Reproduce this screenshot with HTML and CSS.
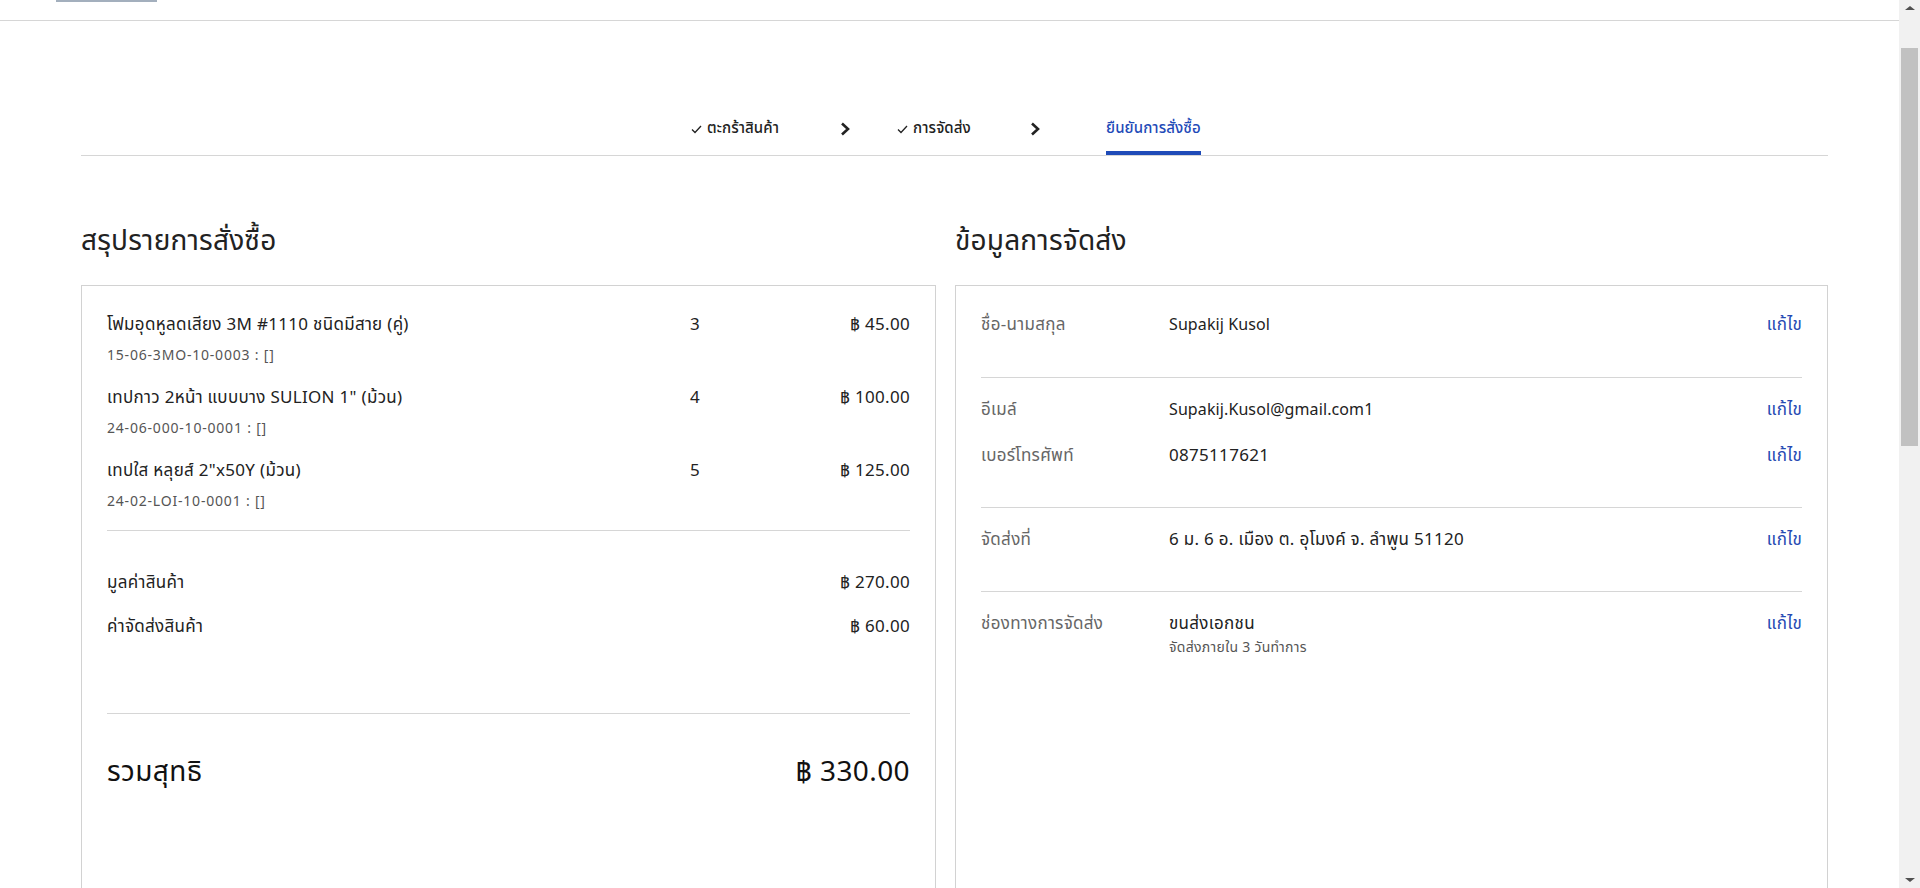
FILE: index.html
```html
<!DOCTYPE html>
<html lang="th">
<head>
<meta charset="utf-8">
<title>ยืนยันการสั่งซื้อ</title>
<link rel="stylesheet" href="styles.css">
</head>
<body>
<header class="topbar"><div class="topbar-mark"></div></header>
<main class="page">
  <nav class="steps">
    <div class="step step-1"><svg class="check" width="11" height="9" viewBox="0 0 11 9"><polyline points="1,4.5 4,7.5 10,1" fill="none" stroke="#222" stroke-width="1.3"/></svg>ตะกร้าสินค้า</div>
    <div class="chev chev-1"><svg width="10" height="14" viewBox="0 0 10 14"><polyline points="2,1.5 8,7 2,12.5" fill="none" stroke="#222" stroke-width="2.6"/></svg></div>
    <div class="step step-2"><svg class="check" width="11" height="9" viewBox="0 0 11 9"><polyline points="1,4.5 4,7.5 10,1" fill="none" stroke="#222" stroke-width="1.3"/></svg>การจัดส่ง</div>
    <div class="chev chev-2"><svg width="10" height="14" viewBox="0 0 10 14"><polyline points="2,1.5 8,7 2,12.5" fill="none" stroke="#222" stroke-width="2.6"/></svg></div>
    <div class="step step-3 active">ยืนยันการสั่งซื้อ</div>
  </nav>

  <div class="columns">
    <section class="col">
      <h2 class="col-title">สรุปรายการสั่งซื้อ</h2>
      <div class="card summary-card">
        <div class="items">
          <div class="item">
            <div class="item-name">โฟมอุดหูลดเสียง 3M #1110 ชนิดมีสาย (คู่)</div>
            <div class="item-qty">3</div>
            <div class="item-price">฿ 45.00</div>
            <div class="item-code">15-06-3MO-10-0003 : []</div>
          </div>
          <div class="item">
            <div class="item-name">เทปกาว 2หน้า แบบบาง SULION 1" (ม้วน)</div>
            <div class="item-qty">4</div>
            <div class="item-price">฿ 100.00</div>
            <div class="item-code">24-06-000-10-0001 : []</div>
          </div>
          <div class="item">
            <div class="item-name">เทปใส หลุยส์ 2"x50Y (ม้วน)</div>
            <div class="item-qty">5</div>
            <div class="item-price">฿ 125.00</div>
            <div class="item-code">24-02-LOI-10-0001 : []</div>
          </div>
        </div>
        <div class="costs">
          <div class="cost-row"><span>มูลค่าสินค้า</span><span>฿ 270.00</span></div>
          <div class="cost-row"><span>ค่าจัดส่งสินค้า</span><span>฿ 60.00</span></div>
        </div>
        <div class="total-row"><span>รวมสุทธิ</span><span>฿ 330.00</span></div>
      </div>
    </section>

    <section class="col">
      <h2 class="col-title">ข้อมูลการจัดส่ง</h2>
      <div class="card info-card">
        <div class="info-group first">
          <div class="info-row"><div class="info-label">ชื่อ-นามสกุล</div><div class="info-value latin">Supakij Kusol</div><a class="edit">แก้ไข</a></div>
        </div>
        <div class="info-group">
          <div class="info-row"><div class="info-label">อีเมล์</div><div class="info-value latin">Supakij.Kusol@gmail.com1</div><a class="edit">แก้ไข</a></div>
          <div class="info-row"><div class="info-label">เบอร์โทรศัพท์</div><div class="info-value">0875117621</div><a class="edit">แก้ไข</a></div>
        </div>
        <div class="info-group">
          <div class="info-row"><div class="info-label">จัดส่งที่</div><div class="info-value">6 ม. 6 อ. เมือง ต. อุโมงค์ จ. ลำพูน 51120</div><a class="edit">แก้ไข</a></div>
        </div>
        <div class="info-group last">
          <div class="info-row"><div class="info-label">ช่องทางการจัดส่ง</div><div class="info-value">ขนส่งเอกชน<div class="info-sub">จัดส่งภายใน 3 วันทำการ</div></div><a class="edit">แก้ไข</a></div>
        </div>
      </div>
    </section>
  </div>
</main>

<div class="scrollbar" aria-hidden="true">
  <div class="sb-arrow sb-up"></div>
  <div class="sb-thumb"></div>
  <div class="sb-arrow sb-down"></div>
</div>
</body>
</html>
```

FILE: styles.css
```css
* { box-sizing: border-box; }
html, body { margin: 0; padding: 0; background: #fff; }
body {
  font-family: "Noto Sans Thai", "Noto Sans", "DejaVu Sans", sans-serif;
  color: #222;
  font-size: 17px;
  letter-spacing: 0.3px;
}

.topbar {
  height: 21px;
  border-bottom: 1px solid #d6d6d6;
  display: flex;
  align-items: flex-start;
}
.topbar-mark {
  margin-left: 56px;
  width: 101px;
  height: 2px;
  background: #a3afbd;
}

.page {
  margin-left: 81px;
  width: 1747px;
  padding-bottom: 200px;
}

/* steps */
.steps {
  display: flex;
  align-items: flex-end;
  padding-top: 98px;
  border-bottom: 1px solid #d6d6d6;
}
.step {
  font-size: 15px;
  font-weight: 500;
  letter-spacing: 0.1px;
  line-height: 20px;
  padding-bottom: 12px;
  border-bottom: 4px solid transparent;
  white-space: nowrap;
  display: flex;
  align-items: center;
  justify-content: center;
  color: #222;
}
.check { margin-right: 5px; }
.step-1 { margin-left: 579px; width: 150px; }
.step-2 { width: 108px; }
.step-3 { margin-left: 24px; }
.step.active { color: #1f4bb8; border-bottom-color: #1f4bb8; }
.chev {
  height: 36px;
  display: flex;
  align-items: flex-start;
  justify-content: center;
  padding-top: 3px;
}
.chev-1 { width: 70px; }
.chev-2 { width: 94px; }

/* columns */
.columns {
  display: grid;
  grid-template-columns: 855px 873px;
  column-gap: 19px;
}
.col-title {
  margin: 68px 0 25px;
  font-size: 28px;
  font-weight: 400;
  letter-spacing: 0.2px;
  line-height: 36px;
  color: #222;
}
.card {
  border: 1px solid #d2d2d2;
  padding: 0 25px;
  min-height: 760px;
}

/* summary */
.items {
  padding-top: 27px;
  padding-bottom: 19px;
  border-bottom: 1px solid #d6d6d6;
  display: flex;
  flex-direction: column;
  gap: 21px;
}
.item {
  display: grid;
  grid-template-columns: 583px 1fr auto;
  row-gap: 10px;
}
.item-name, .item-qty, .item-price { line-height: 24px; }
.item-price { text-align: right; }
.item-code {
  grid-column: 1 / -1;
  font-size: 14px;
  letter-spacing: 0.8px;
  line-height: 18px;
  color: #555;
}
.costs {
  padding-top: 40px;
  padding-bottom: 74px;
  border-bottom: 1px solid #d6d6d6;
  display: flex;
  flex-direction: column;
  gap: 20px;
}
.cost-row {
  display: flex;
  justify-content: space-between;
  line-height: 24px;
}
.total-row {
  display: flex;
  justify-content: space-between;
  padding-top: 42px;
  font-size: 28px;
  letter-spacing: 0.4px;
  line-height: 34px;
  color: #111;
}

/* info */
.info-group {
  padding: 20px 0 39px;
  border-bottom: 1px solid #d6d6d6;
  display: flex;
  flex-direction: column;
  gap: 22px;
}
.info-group.first { padding-top: 27px; padding-bottom: 40px; }
.info-group.last { border-bottom: none; }
.info-row {
  display: grid;
  grid-template-columns: 188px 1fr auto;
  line-height: 24px;
}
.info-label { color: #666; }
.info-value { color: #222; }
.info-value.latin { font-size: 16px; letter-spacing: 0.1px; }
.info-sub { font-size: 14px; letter-spacing: 0.3px; line-height: 18px; color: #555; margin-top: 3px; }
.edit { color: #2549b3; cursor: pointer; }

/* browser scrollbar look-alike (overlays the page edge) */
.scrollbar {
  position: fixed;
  top: 0;
  right: 0;
  width: 21px;
  height: 100vh;
  background: #f1f1f1;
}
.sb-thumb {
  position: absolute;
  top: 48px;
  left: 2px;
  width: 17px;
  height: 398px;
  background: #c1c1c1;
}
.sb-arrow {
  position: absolute;
  left: 6px;
  width: 0;
  height: 0;
  border-left: 5px solid transparent;
  border-right: 5px solid transparent;
}
.sb-up { top: 6px; border-bottom: 4px solid #505050; }
.sb-down { bottom: 6px; border-top: 4px solid #505050; }
```
